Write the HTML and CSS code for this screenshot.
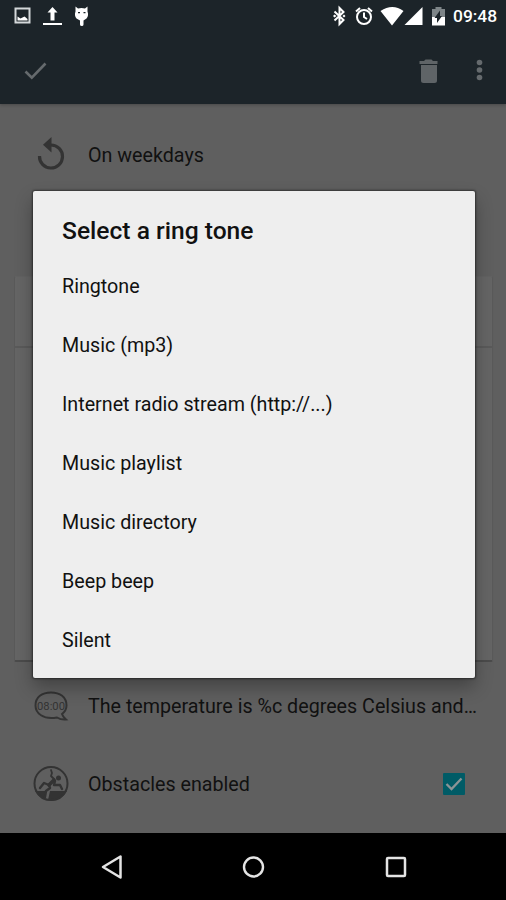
FILE: index.html
```
<!DOCTYPE html>
<html lang="en">
<head>
<meta charset="utf-8">
<title>Select a ring tone</title>
<link rel="stylesheet" href="styles.css">
</head>
<body>
<div class="screen">
  <header class="header">
    <div class="status">
      <svg class="notifications" width="92" height="32" viewBox="0 0 92 32" fill="#fff">
        <path fill="none" stroke="#d4d8da" stroke-width="2" d="M15.500 8.500h14v14h-14z"/>
        <path d="M17.500 20.500v-4l3 2 4-2 3 2.500v1.500z"/>
        <path d="M52.500 7l5 5.500h-3v8h-4v-8h-3zM43 23h19v2H43z"/>
        <path d="M75.500 6.500l2.500 2q3.500-1 7 0l2.500-2v5q1.500 4-1 7l-3 2v4q0 1.500-1.700 1.500t-1.800-1.500v-4l-3.500-2q-2.500-3-1-7z"/>
        <path fill="#1c2429" d="M78 12h2v1.300h-2zM83.500 12h2v1.300h-2z"/>
      </svg>
      <svg class="system" width="126" height="32" viewBox="0 0 126 32" fill="#fff">
        <path fill="none" stroke="#fff" stroke-width="2" d="M14.500 11.500l9 8.500-4 4V8l4 4-9 8.500"/>
        <path d="M14.500 14.500l2 1.500-2 1.500-1.500-1.500zM24 14.500l1.500 1.500-1.500 1.500-1.500-1.500z"/>
        <g fill="none" stroke="#fff" stroke-width="2"><circle cx="44" cy="17" r="7"/><path d="M44 12.500V17l3 2M36 11.500l4-3.500M52 11.500l-4-3.500"/></g>
        <path d="M60.500 11q12-8 23 0L72 25.500zM102.500 7v18h-18z"/>
        <path fill="#7e8588" d="M112 9h3.500V7h6v2h3.500v8h-13z"/><path d="M112 17h13v8.500h-13z"/>
        <path fill="#1c2429" d="M120 10.500V16h2l-5 7v-5h-2.500z"/>
      </svg>
      <span class="clock">09:48</span>
    </div>
    <div class="toolbar">
      <svg width="24" height="20" viewBox="0 0 24 20"><path fill="none" stroke="#656a6d" stroke-width="2.600" d="M1.500 10.500l6.300 6.200L21.500 2.500"/></svg>
      <svg class="trash" width="20" height="25" viewBox="0 0 20 25" fill="#5f6467"><path d="M.5 2H5l1.500-1.500h6L14 2h4.500v3H.5zM2 6h16v15.500q0 2.500-2.500 2.500h-11Q2 24 2 21.500z"/></svg>
      <svg width="8" height="24" viewBox="0 0 8 24" fill="#656a6d"><circle cx="4.500" cy="4.500" r="2.800"/><circle cx="4.500" cy="12" r="2.800"/><circle cx="4.500" cy="19.500" r="2.800"/></svg>
    </div>
  </header>
  <main class="settings">
    <div class="row repeat">
      <svg class="icon" width="36" height="36" viewBox="0 0 36 36"><path fill="none" stroke="#333" stroke-width="3.200" d="M6.500 19A11.500 11.500 0 1 0 18 8"/><path fill="#333" d="M18.500 0v15.500L10 7.800z"/></svg>
      <span>On weekdays</span>
    </div>
    <section class="card"><div class="card-head"></div></section>
    <div class="row message">
      <svg class="icon" width="36" height="36" viewBox="0 0 36 36"><path fill="none" stroke="#333" stroke-width="2" d="M24 29.500C10 32 2.500 25 2.500 17.500 2.500 9 9 4.500 18 4.500S33.500 9 33.500 17.500c0 4-2 6.500-4.500 8.500q1 3 4 5.500-5 .5-9-2z"/><text class="bubble-time" x="4" y="21.500" textLength="28" lengthAdjust="spacingAndGlyphs">08:00</text></svg>
      <span>The temperature is %c degrees Celsius and…</span>
    </div>
    <div class="row obstacles">
      <svg class="icon" width="36" height="36" viewBox="0 0 36 36"><path fill="#333" d="M2 25h10v4l-1 4 4 1 2-9h17Q29 35 18 35T2 25z"/><g fill="none" stroke="#333" stroke-linecap="round" stroke-linejoin="round"><circle cx="18" cy="17.500" r="16.500" stroke-width="2"/><path stroke-width="3.600" d="M21 14l-5 5"/><path stroke-width="2.400" d="M16 19l-5-2-4 5M16 19l1 3-4 3-1 6M22 15l-1 4 6 0 2 4"/><path stroke-width="1.800" d="M21 13l-3-3 1-3-1-3"/></g><circle cx="25.500" cy="12" r="2.500" fill="#333"/></svg>
      <span>Obstacles enabled</span>
      <svg class="checkbox" width="22" height="22" viewBox="0 0 22 22"><rect width="22" height="22" rx="1" fill="#005b66"/><path fill="none" stroke="#8b9496" stroke-width="2.300" d="M3.500 11l5 5L18.500 5.500"/></svg>
    </div>
  </main>
  <nav class="navigation">
    <svg width="22" height="26" viewBox="0 0 22 26"><path fill="none" stroke="#e4e4e4" stroke-width="2.500" stroke-linejoin="round" d="M20.500 2.500v21L3 13z"/></svg>
    <svg width="24" height="24" viewBox="0 0 24 24"><circle cx="11.500" cy="12" r="9.500" fill="none" stroke="#e4e4e4" stroke-width="2.400"/></svg>
    <svg width="22" height="22" viewBox="0 0 22 22"><rect x="2" y="2" width="18" height="18" rx="1" fill="none" stroke="#e4e4e4" stroke-width="2.500"/></svg>
  </nav>
  <div class="dialog" role="dialog">
    <h1>Select a ring tone</h1>
    <ul>
      <li>Ringtone</li>
      <li>Music (mp3)</li>
      <li>Internet radio stream (http://...)</li>
      <li>Music playlist</li>
      <li>Music directory</li>
      <li>Beep beep</li>
      <li>Silent</li>
    </ul>
  </div>
</div>
</body>
</html>
```
FILE: styles.css
```
* { box-sizing: border-box; }
body { margin: 0; font-family: Roboto, sans-serif; font-size: 19.7px; color: #111; }
svg { display: block; flex: none; }
.screen { position: relative; width: 506px; height: 900px; overflow: hidden; background: #5f5f5f; display: flex; flex-direction: column; }
.header { height: 104px; flex: none; background: #1c2429; box-shadow: 0 1px 3px rgba(0,0,0,.25); }
.status { height: 32px; display: flex; justify-content: space-between; padding-right: 9px; }
.system { margin-left: auto; }
.clock { width: 44px; margin-left: 7px; line-height: 33px; font-size: 17.4px; font-weight: 500; color: #fff; white-space: nowrap; }
.toolbar { height: 72px; padding: 4px 23px 0 24px; display: flex; align-items: flex-start; }
.toolbar > svg:first-child { margin-top: 25px; }
.trash { margin: 23px 36px 0 auto; }
.toolbar > svg:last-child { margin-top: 22px; }
.settings { height: 729px; display: flex; flex-direction: column; }
.row { display: flex; align-items: center; height: 78px; padding-left: 33px; white-space: nowrap; }
.icon { margin-right: 19px; }
.repeat { height: 102px; margin-bottom: 70px; }
.card { height: 386px; margin: 0 13px 0 14px; background: #656565; border: 1px solid #5a5a5a; border-top-color: #626262; border-bottom: 2px solid #4b4b4b; border-radius: 2px; }
.card-head { height: 71px; border-bottom: 2px solid #5a5a5a; }
.message { height: 88px; }
.bubble-time { font: 11px Roboto, sans-serif; fill: #333; }
.obstacles { height: 68px; }
.checkbox { margin: 0 41px 0 auto; }
.navigation { height: 67px; background: #000; display: flex; justify-content: space-between; align-items: center; padding: 1px 99px 0 100px; }
.dialog { position: absolute; left: 33px; top: 191px; width: 442px; height: 487px; padding: 25px 29px; background: #eee; border-radius: 2px; box-shadow: 0 0 2px 1px rgba(0,0,0,.45), 0 9px 18px rgba(0,0,0,.3); }
h1 { margin: 0; height: 41px; font-size: 24.6px; line-height: 29px; font-weight: 500; color: #111; white-space: nowrap; }
ul { list-style: none; margin: 0; padding: 0; }
li { height: 59px; line-height: 59px; white-space: nowrap; }
```
